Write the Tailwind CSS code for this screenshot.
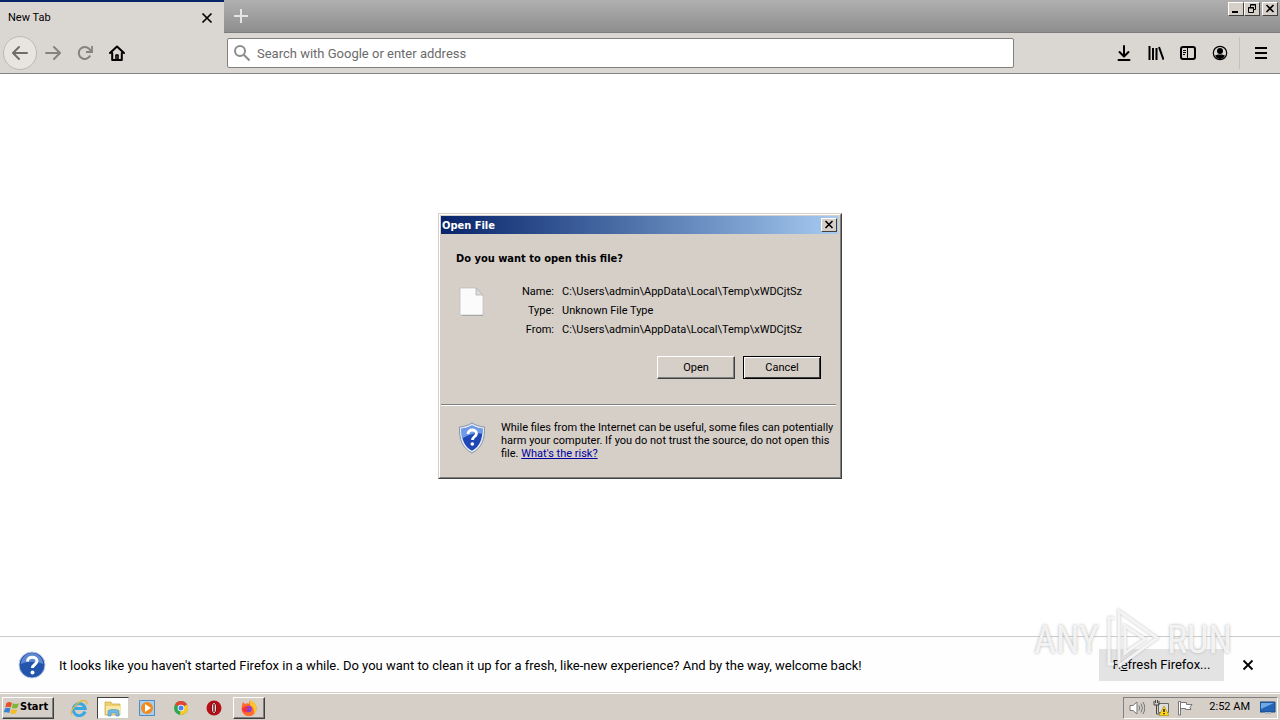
<!DOCTYPE html>
<html lang="en">
<head>
<meta charset="UTF-8">
<meta name="viewport" content="width=device-width, initial-scale=1.0">
<title>New Tab</title>
<script src="https://cdn.jsdelivr.net/npm/@tailwindcss/browser@4"></script>
</head>
<body class="h-screen flex flex-col overflow-hidden bg-white text-black text-[11px] font-['Roboto','Noto_Sans',sans-serif]">
<div class="relative flex-1 flex flex-col min-h-0">

<!-- tab strip -->
<header class="h-[33px] flex items-start justify-between bg-linear-to-b from-[#b0b0b0] to-[#8e8e8e] border-b border-[#7d7d7d]">
<div class="flex h-full">
<div class="w-56 h-[33px] flex items-center justify-between border-t-2 border-[#0a246a] bg-[#dad6d1] pl-2 pr-[11px]">
<span class="pt-0.5">New Tab</span>
<button aria-label="Close tab"><svg class="size-3" viewBox="0 0 12 12" fill="none" stroke="#000" stroke-width="1.7"><path d="M1.5 1.5l9 9M10.500 1.500l-9 9"/></svg></button>
</div>
<button class="w-[34px] flex items-center justify-center" aria-label="New tab"><svg class="size-4" viewBox="0 0 16 16" fill="none" stroke="#e4e4e4" stroke-width="2"><path d="M8 1v14M1 8h14"/></svg></button>
</div>
<div class="flex pt-0.5 pr-0.5">
<button class="w-4 h-[14px] bg-[#d5cfc8] border border-t-white border-l-white border-r-[#404040] border-b-[#404040]" aria-label="Minimize"><svg class="w-[14px] h-3" viewBox="0 0 14 12"><path d="M3 8h6v2H3z"/></svg></button>
<button class="w-4 h-[14px] bg-[#d5cfc8] border border-t-white border-l-white border-r-[#404040] border-b-[#404040]" aria-label="Restore"><svg class="w-[14px] h-3" viewBox="0 0 14 12" fill="none" stroke="#000"><path d="M5.500 4V1.500h5v5H9M5 2h6M3.500 4.500h5v5h-5zM3 5h6"/></svg></button>
<button class="w-4 h-[14px] ml-0.5 bg-[#d5cfc8] border border-t-white border-l-white border-r-[#404040] border-b-[#404040]" aria-label="Close"><svg class="w-[14px] h-3" viewBox="0 0 14 12" fill="none" stroke="#000" stroke-width="1.6"><path d="M3.500 2l7 7M10.500 2l-7 7"/></svg></button>
</div>
</header>

<!-- navigation bar -->
<nav class="h-[41px] flex items-center bg-[#dad6d1] border-b border-[#848484] pl-[3px] pr-1">
<button class="size-[34px] rounded-full border border-[#bcb9b4] bg-[#e8e5e1] flex items-center justify-center" aria-label="Back"><svg class="size-4" viewBox="0 0 16 16" fill="none" stroke="#6f6d6a" stroke-width="2" stroke-linecap="round" stroke-linejoin="round"><path d="M15 8H1.500M7 2L1 8l6 6"/></svg></button>
<button class="w-8 flex justify-center" aria-label="Forward"><svg class="size-4" viewBox="0 0 16 16" fill="none" stroke="#85827f" stroke-width="2" stroke-linecap="round" stroke-linejoin="round"><path d="M1 8h13.500M9 2l6 6-6 6"/></svg></button>
<button class="w-8 flex justify-center" aria-label="Reload"><svg class="size-4" viewBox="0 0 16 16" fill="none" stroke="#85827f" stroke-width="2"><path d="M13.200 10.500A6 6 0 1 1 12.500 4.200L14 6"/><path d="M15 1v6H9" stroke-width="1.800"/></svg></button>
<button class="w-8 flex justify-center" aria-label="Home"><svg class="size-4" viewBox="0 0 16 16" fill="none" stroke="#000" stroke-width="2" stroke-linejoin="round" stroke-linecap="round"><path d="M1 8l7-6.500L15 8M3.200 8v7h9.600V8"/><path d="M7 14.500V10h2v4.500" stroke-width="1.600"/></svg></button>
<label class="ml-[94px] w-[787px] h-[30px] flex items-center gap-1.5 bg-white border border-[#82807d] rounded-xs px-[5px]">
<svg class="size-[18px] shrink-0" viewBox="0 0 18 18" fill="none" stroke="#8c8c8c" stroke-width="2"><circle cx="7" cy="7" r="5"/><path d="M10.800 10.800l5.700 5.700"/></svg>
<input type="text" class="flex-1 min-w-0 pt-0.5 text-[13px] outline-none placeholder:text-[#6b6b6b]" placeholder="Search with Google or enter address" aria-label="Search with Google or enter address">
</label>
<div class="ml-auto flex items-center">
<button class="w-8 flex justify-center" aria-label="Downloads"><svg class="size-4" viewBox="0 0 16 16" fill="none" stroke="#000" stroke-width="2" stroke-linecap="round" stroke-linejoin="round"><path d="M8 1v10M3.500 7L8 11.500 12.500 7M2.500 15h11"/></svg></button>
<button class="w-8 flex justify-center" aria-label="Library"><svg class="size-4" viewBox="0 0 16 16" fill="none" stroke="#000" stroke-width="2"><path d="M1.500 1v14M5 3v12M8.500 3v12M11 2l4.500 12.700"/></svg></button>
<button class="w-8 flex justify-center" aria-label="Sidebars"><svg class="size-4" viewBox="0 0 16 16" fill="none" stroke="#000" stroke-width="2"><rect x="1" y="2" width="14" height="12" rx="2"/><path d="M7.500 2v12M3 5.500h3M3 7.500h3M3 9.500h2" stroke-width="1"/></svg></button>
<button class="w-8 flex justify-center" aria-label="Account"><svg class="size-4" viewBox="0 0 16 16"><circle cx="8" cy="8" r="6.700" fill="none" stroke="#000" stroke-width="1.200"/><circle cx="8" cy="6" r="3"/><path d="M3 10.500c2-1.500 8-1.500 10 0-1 2.500-3 3.500-5 3.500s-4-1-5-3.500z"/></svg></button>
<div class="ml-[3px] w-px h-8 bg-[#c4c0bb]"></div>
<button class="w-9 pl-1.5 flex justify-center" aria-label="Menu"><svg class="size-4" viewBox="0 0 16 16"><path d="M2 2h12v2H2zM2 7h12v2H2zM2 12h12v2H2z"/></svg></button>
</div>
</nav>

<main class="flex-1 bg-white"></main>

<!-- refresh notification -->
<section class="h-14 flex items-center border-t border-[#cbcbcb] bg-[#fefefe] pl-[18px] pr-[26px] text-[13px]">
<svg class="size-7 shrink-0" viewBox="0 0 28 28"><circle cx="14" cy="14" r="13" fill="#2455ad" stroke="#b7c8e2"/><path d="M3 13a11 11 0 0 1 22 0c-7-3-15-3-22 0z" fill="#5d88cf"/><path d="M9.500 10.500c0-6 9.500-5.500 9.500-.5 0 3.500-4.500 3.500-4.500 7" fill="none" stroke="#fff" stroke-width="3"/><circle cx="14.500" cy="21.500" r="2" fill="#fff"/></svg>
<p class="ml-[13px] pt-0.5">It looks like you haven't started Firefox in a while. Do you want to clean it up for a fresh, like-new experience? And by the way, welcome back!</p>
<button class="ml-auto w-[125px] h-8 bg-[#e3e3e3]">R<u>e</u>fresh Firefox...</button>
<button class="ml-[18px]" aria-label="Dismiss"><svg class="size-3" viewBox="0 0 12 12" fill="none" stroke="#000" stroke-width="1.800"><path d="M1.500 1.500l9 9M10.500 1.500l-9 9"/></svg></button>
</section>

<!-- Open File dialog -->
<div class="absolute inset-0 flex items-center justify-center pointer-events-none">
<div role="dialog" aria-labelledby="dialog-title" class="pointer-events-auto w-[404px] bg-[#d5cfc8] border border-t-[#d5cfc8] border-l-[#d5cfc8] border-r-[#404040] border-b-[#404040]">
<div class="border border-t-white border-l-white border-r-[#808080] border-b-[#808080] px-px pt-px pb-[17px]">
<div class="h-[18px] flex items-center justify-between bg-linear-to-r from-[#0a246a] to-[#a6caf0] pl-px pr-px mr-px">
<h1 id="dialog-title" class="pt-0.5 font-bold text-white font-['DejaVu_Sans_Condensed','Noto_Sans',sans-serif]">Open File</h1>
<button class="w-4 h-[14px] bg-[#d5cfc8] border border-t-white border-l-white border-r-[#404040] border-b-[#404040]" aria-label="Close dialog"><svg class="w-[14px] h-3" viewBox="0 0 14 12" fill="none" stroke="#000" stroke-width="1.600"><path d="M3.500 2l7 7M10.500 2l-7 7"/></svg></button>
</div>
<div class="pl-[15px] pr-[18px] pt-[17px]">
<h2 class="font-bold leading-4 font-['DejaVu_Sans_Condensed','Noto_Sans',sans-serif]">Do you want to open this file?</h2>
<div class="flex pt-[15px]">
<svg class="w-7 h-8 mt-1 shrink-0" viewBox="0 0 28 32"><path d="M6 4h15l6 6v20H6z" fill="#000" opacity=".25"/><path d="M4 2h16l7 7v20H4z" fill="#fbfbfb" stroke="#bbb" stroke-width=".7"/><path d="M20 2v7h7z" fill="#ddd" stroke="#aaa" stroke-width=".7"/></svg>
<dl class="grid grid-cols-[70px_1fr] gap-x-2 leading-[19px]">
<dt class="text-right">Name:</dt><dd>C:\Users\admin\AppData\Local\Temp\xWDCjtSz</dd>
<dt class="text-right">Type:</dt><dd>Unknown File Type</dd>
<dt class="text-right">From:</dt><dd>C:\Users\admin\AppData\Local\Temp\xWDCjtSz</dd>
</dl>
</div>
<div class="flex justify-end gap-2 pt-[17px]">
<button class="w-[78px] h-[23px] pt-0.5 border border-t-white border-l-white border-r-[#404040] border-b-[#404040] shadow-[inset_-1px_-1px_#808080]">Open</button>
<button class="w-[78px] h-[23px] pt-0.5 border border-black shadow-[inset_1px_1px_#fff,inset_-1px_-1px_#404040]">Cancel</button>
</div>
</div>
<div class="mt-[25px] mr-[3px] border-t border-t-[#808080] border-b border-b-white"></div>
<div class="flex pl-[17px] pt-[15px]">
<svg class="w-7 h-8 mt-px shrink-0" viewBox="0 0 28 32"><path d="M14 1c4 2.500 8 3.500 12.500 4C27 17 24 26 14 31 4 26 1 17 1.500 5 6 4.500 10 3.500 14 1z" fill="#e3e9f1" stroke="#8496b0"/><path d="M14 3.500c3.500 2 7 3 10.500 3.300C24.500 17 22 24.500 14 28.700 6 24.500 3.500 17 3.500 6.800 7 6.500 10.500 5.500 14 3.500z" fill="#1f46b5"/><path d="M14 3.500c3.500 2 7 3 10.500 3.300l-.3 5C18 10 9 13 4 17 3.500 14 3.500 10 3.500 6.800 7 6.500 10.500 5.500 14 3.500z" fill="#6f9be6"/><path d="M10 12c0-5.500 8.500-5 8.500-.5 0 3-4 3-4 6.500" fill="none" stroke="#fff" stroke-width="2.800"/><circle cx="14.300" cy="22" r="1.800" fill="#fff"/></svg>
<p class="ml-[15px] flex-1 leading-[13px]">While files from the Internet can be useful, some files can potentially harm your computer. If you do not trust the source, do not open this file. <a href="#" class="text-[#0000a0] underline">What's the risk?</a></p>
</div>
</div>
</div>
</div>

<!-- watermark -->
<div class="absolute right-12 bottom-5 h-16 flex items-center gap-1.5 pointer-events-none text-[38px] leading-none text-white/80 font-['Roboto_Condensed','Liberation_Sans_Narrow',sans-serif] [text-shadow:0_0_3px_#aaa]">
<span>ANY</span>
<svg class="w-14 h-16 drop-shadow-[0_0_1px_#aaa]" viewBox="0 0 56 64" fill="none" stroke="#fff" stroke-opacity=".8" stroke-width="3"><path d="M14 3l38 27-38 28zM9 10H4v46h5M20 18v27l20-14z"/></svg>
<span>RUN</span>
</div>
</div>

<!-- taskbar -->
<footer class="h-7 flex items-center bg-[#d5cfc8] border-t border-[#d5cfc8] shadow-[inset_0_1px_#fff] pl-0.5 pr-0.5">
<button class="w-[52px] h-[22px] mt-0.5 flex items-center pl-px text-[11px] font-bold border border-t-white border-l-white border-r-[#404040] border-b-[#404040] shadow-[inset_-1px_-1px_#808080] font-['DejaVu_Sans_Condensed','Noto_Sans',sans-serif]">
<svg class="size-4 shrink-0" viewBox="0 0 16 16"><path d="M2.500 3c2-1.500 3.500-1 5.500 0L6.700 7.500c-2-1-3.500-1-5.500 0z" fill="#e5502b"/><path d="M9 3.300c2 1 4 1 6 0l-1.500 4.500c-2 1-4 .8-5.800 0z" fill="#7db83a"/><path d="M1 8.500c2-1 3.500-1 5.500 0L5.200 13C3.500 12-.5 12-.5 13z" fill="#3e82cf"/><path d="M7.500 9c2 1 3.700 1 5.700 0L12 13.300c-2 1-4 .8-5.800 0z" fill="#f4bd27"/></svg>Start</button>
<div class="flex items-center ml-2 mt-0.5">
<button class="w-[34px] h-[22px] flex items-center justify-center" aria-label="Internet Explorer"><svg class="size-[18px]" viewBox="0 0 18 18" fill="none"><path d="M15 12.500A6 6 0 1 1 15.200 9.500H5" stroke="#39a7e0" stroke-width="3"/><path d="M2 15.500C-2 13 10-1 16 2c1 .5 1 2 .3 3.500" stroke="#e4b942" stroke-width="1.300"/></svg></button>
<button class="w-8 h-[22px] ml-px flex items-center justify-center bg-white border border-t-[#404040] border-l-[#404040] border-r-[#d5cfc8] border-b-[#d5cfc8]" aria-label="Explorer"><svg class="size-[18px]" viewBox="0 0 18 18"><path d="M1 3h6l1 2h8v11H1z" fill="#efcf6c" stroke="#c9a544" stroke-width=".7"/><path d="M2 7h15v8H2z" fill="#f9e8a4"/><path d="M4 17v-5c0-2 11-2 11 0v5h-3v-3H7v3z" fill="#72b8e1" stroke="#468fc1" stroke-width=".6"/></svg></button>
<button class="w-9 h-[22px] flex items-center justify-center" aria-label="Media Player"><svg class="size-4" viewBox="0 0 16 16"><path d="M.5.500h15v15H.5z" fill="#a9d0f0" stroke="#4e8cc3"/><circle cx="8" cy="8" r="6" fill="#f28a1c"/><path d="M6 4l6 4-6 4z" fill="#fff"/></svg></button>
<button class="w-8 h-[22px] flex items-center justify-center" aria-label="Chrome"><svg class="size-[14px]" viewBox="0 0 14 14"><circle cx="7" cy="7" r="7" fill="#2fa84f"/><path d="M7 7L.9 3.500A7 7 0 0 1 13.100 3.500z" fill="#e24435"/><path d="M7 7l6.100-3.500A7 7 0 0 1 7 14l-1-1z" fill="#f9c82d"/><circle cx="7" cy="7" r="3.300" fill="#fff"/><circle cx="7" cy="7" r="2.500" fill="#4286f0"/></svg></button>
<button class="w-[34px] h-[22px] flex items-center justify-center" aria-label="Opera"><svg class="size-4" viewBox="0 0 16 16"><circle cx="8" cy="8" r="7.500" fill="#b80f17"/><ellipse cx="8" cy="8" rx="2.700" ry="5.500" fill="#e9e3e3" stroke="#6d080c"/><path d="M8 4v8" stroke="#901118" stroke-width="1.500"/></svg></button>
<button class="w-8 h-[22px] ml-0.5 flex items-center justify-center border border-t-white border-l-white border-r-[#404040] border-b-[#404040] shadow-[inset_-1px_-1px_#808080]" aria-label="Firefox"><svg class="size-4" viewBox="0 0 16 16"><path d="M1 5l1-3 2 2c2-1 3-1 4 0l1-4c4 2 6.500 5 6.500 8.500A7.500 7.500 0 0 1 .5 9z" fill="#ff6b2b"/><path d="M9 0c5 2 6.500 5 6.500 8.500 0 2-1 4-2.500 5.500.5-5-1-7-4-9z" fill="#ffc42e"/><circle cx="7.500" cy="9" r="3.300" fill="#8a3fd0"/><path d="M1 9c2-3 4-3 7-1-3 0-3 3-1 4-3 1-5 0-6-3z" fill="#f5303d"/></svg></button>
</div>
<div class="ml-auto mt-0.5 h-[22px] flex items-center border border-t-[#808080] border-l-[#808080] border-r-white border-b-white pl-[5px] pr-px gap-2">
<svg class="size-4" viewBox="0 0 16 16" fill="#fff" stroke="#777"><path d="M1 5.500h3L8 2v12l-4-3.500H1z"/><path d="M10 5.500q1.500 2.500 0 5M12 3.500q3 4.500 0 9M14 2q3.500 6 0 12" fill="none"/></svg>
<svg class="size-4" viewBox="0 0 16 16"><path d="M5.500 3.500h10v9h-10z" fill="#ddd" stroke="#666"/><path d="M1 1v4h5V1M2.500 0v3M4.500 0v3M3.500 5v9h5" fill="none" stroke="#444"/><path d="M11 6l5 9.500H6z" fill="#ffd91c" stroke="#a98700" stroke-width=".6"/><path d="M11 9v3M11 13v1.300" stroke="#000" stroke-width="1.300"/></svg>
<svg class="size-4" viewBox="0 0 16 16" fill="#fff" stroke="#777"><path d="M1.500 15V1.500h2V15zM3.500 2.500h6v2h5.500l-2 3 1 2H8.500v-1h-5z"/></svg>
<time class="ml-2 mr-0.5">2:52 AM</time>
<svg class="size-4" viewBox="0 0 16 16"><path d="M0 2h15v10H0z" fill="#2264b8" stroke="#1b467e"/><path d="M1 3h13L1 9z" fill="#6fa9e2"/><path d="M5 12h6v2H5z" fill="#a8b5c3"/></svg>
</div>
</footer>
</body>
</html>
